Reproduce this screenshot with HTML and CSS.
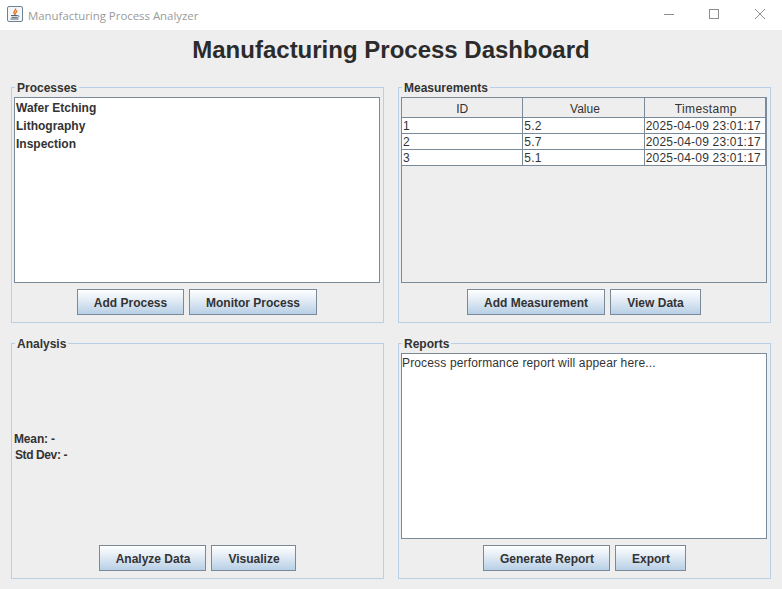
FILE: index.html
```html
<!DOCTYPE html>
<html>

<head>
    <meta charset="utf-8" />
    <title>Manufacturing Process Analyzer</title>
    <link rel="stylesheet" href="styles.css">
</head>

<body>
    <div class="titlebar">
        <svg class="app_icon" width="16" height="16" viewBox="0 0 16 16">
            <rect x="0.5" y="0.5" width="15" height="15" rx="1.5" fill="#f4f6f8" stroke="#6f8294"></rect>
            <path d="M8.5 2.500c1 1.600-2.200 2.800-1.600 4.600.2.6.7 1 1.100 1.300-.2-1.600 2.600-2.400 1.600-4.200" fill="none" stroke="#e8701a" stroke-width="1.3"></path>
            <path d="M4 9.500h6.500M4.500 11.300h5.500M3.500 13h8" stroke="#4a6272" stroke-width="1"></path>
            <path d="M10.500 9.500c2 -.3 2 1.700 -.5 2" fill="none" stroke="#4a6272" stroke-width="0.8"></path>
        </svg>
        <span class="app_name">Manufacturing Process Analyzer</span>
        <div class="win_btns">
            <svg width="46" height="30" viewBox="0 0 46 30"><path d="M20 14.500h10" stroke="#8c8c8c"></path></svg>
            <svg width="46" height="30" viewBox="0 0 46 30"><rect x="19.500" y="9.500" width="9" height="9" fill="none" stroke="#8c8c8c"></rect></svg>
            <svg width="46" height="30" viewBox="0 0 46 30"><path d="M19 9l10 10M29 9l-10 10" stroke="#8c8c8c"></path></svg>
        </div>
    </div>

    <h1 class="main_title">Manufacturing Process Dashboard</h1>

    <div class="panels">
        <fieldset class="panel">
            <legend>Processes</legend>
            <ul class="process_list">
                <li>Wafer Etching</li>
                <li>Lithography</li>
                <li>Inspection</li>
            </ul>
            <div class="btn_row">
                <button class="btn btn_add_process">Add Process</button>
                <button class="btn btn_monitor">Monitor Process</button>
            </div>
        </fieldset>

        <fieldset class="panel">
            <legend>Measurements</legend>
            <div class="table_div">
                <table cellspacing="0">
                    <thead>
                        <tr><th>ID</th><th>Value</th><th>Timestamp</th></tr>
                    </thead>
                    <tbody>
                        <tr><td>1</td><td>5.2</td><td>2025-04-09 23:01:17</td></tr>
                        <tr><td>2</td><td>5.7</td><td>2025-04-09 23:01:17</td></tr>
                        <tr><td>3</td><td>5.1</td><td>2025-04-09 23:01:17</td></tr>
                    </tbody>
                </table>
            </div>
            <div class="btn_row">
                <button class="btn btn_add_measure">Add Measurement</button>
                <button class="btn btn_view">View Data</button>
            </div>
        </fieldset>

        <fieldset class="panel">
            <legend>Analysis</legend>
            <div class="stats">
                <div class="stat">Mean: -</div>
                <div class="stat stat_dev">Std Dev: -</div>
            </div>
            <div class="btn_row">
                <button class="btn btn_analyze">Analyze Data</button>
                <button class="btn btn_visualize">Visualize</button>
            </div>
        </fieldset>

        <fieldset class="panel">
            <legend>Reports</legend>
            <div class="report_box">Process performance report will appear here...</div>
            <div class="btn_row">
                <button class="btn btn_generate">Generate Report</button>
                <button class="btn btn_export">Export</button>
            </div>
        </fieldset>
    </div>
</body>

</html>
```

FILE: styles.css
```css
html,
body {
    margin: 0;
    height: 100%;
}

body {
    background: #eeeeee;
    color: #333333;
    font-family: "Liberation Sans", Arial, sans-serif;
    font-size: 12px;
    overflow: hidden;
}

.titlebar {
    height: 30px;
    background: #ffffff;
    display: flex;
    align-items: center;
    padding-left: 7px;
}

.app_icon {
    margin-right: 5px;
    margin-bottom: 2px;
}

.app_name {
    color: #9a9a9a;
    font-size: 11.4px;
    font-family: "Open Sans", sans-serif;
}

.win_btns {
    margin-left: auto;
    display: flex;
}

.win_btns svg {
    display: block;
}

.main_title {
    margin: 0;
    height: 50px;
    padding-top: 6px;
    box-sizing: border-box;
    text-align: center;
    font-size: 24px;
    line-height: 28px;
    font-weight: bold;
    color: #2b2b2b;
}

.panels {
    display: grid;
    grid-template-columns: 373px 373px;
    grid-template-rows: 243px 243px;
    column-gap: 14px;
    row-gap: 13px;
    padding-left: 11px;
}

.panel {
    margin: 0;
    padding: 3px 3px 7px 2px;
    min-width: 0;
    border: 1px solid #b8cfe5;
    display: flex;
    flex-direction: column;
}

.panel legend {
    margin-left: 1px;
    padding: 2px 2px 0 2px;
    font-weight: bold;
    font-size: 12px;
    line-height: 12px;
    color: #333333;
}

.process_list {
    flex: 1;
    margin: 0;
    padding: 1px 0 0 1px;
    list-style: none;
    background: #ffffff;
    border: 1px solid #7a8a99;
    font-weight: bold;
}

.process_list li {
    height: 18px;
    line-height: 18px;
}

.table_div {
    flex: 1;
    border: 1px solid #7a8a99;
    background: #eeeeee;
}

.table_div table {
    width: 100%;
    table-layout: fixed;
    border-collapse: separate;
}

.table_div th {
    height: 17px;
    padding: 2px 0 0 0;
    font-weight: normal;
    text-align: center;
    background: #eeeeee;
    border-right: 1px solid #7a8a99;
    border-bottom: 1px solid #7a8a99;
}

.table_div th:nth-child(2) {
    padding-left: 3px;
}

.table_div th:nth-child(3) {
    padding-left: 2px;
    letter-spacing: 0.35px;
}

.table_div td {
    height: 13px;
    padding: 2px 0 0 1px;
    line-height: 13px;
    letter-spacing: 0.2px;
    background: #ffffff;
    border-right: 1px solid #7a8a99;
    border-bottom: 1px solid #7a8a99;
    white-space: nowrap;
    overflow: hidden;
}

.stats {
    flex: 1;
    display: flex;
    flex-direction: column;
    justify-content: center;
    padding-top: 2px;
    font-weight: bold;
}

.stat {
    height: 16px;
    line-height: 16px;
    letter-spacing: -0.15px;
}

.stat_dev {
    padding-left: 1px;
    letter-spacing: -0.4px;
}

.report_box {
    flex: 1;
    padding: 2px 0 0 0;
    background: #ffffff;
    border: 1px solid #7a8a99;
    line-height: 15px;
    letter-spacing: 0.15px;
}

.btn_row {
    display: flex;
    justify-content: center;
    gap: 5px;
    margin-top: 6px;
}

.btn {
    height: 26px;
    padding: 2px 0 0 0;
    font-family: inherit;
    font-size: 12px;
    font-weight: bold;
    color: #333333;
    border: 1px solid #7a8a99;
    background: linear-gradient(180deg, #ffffff 0%, #dde8f3 50%, #b8cfe5 100%);
}

.btn_add_process { width: 107px; }
.btn_monitor { width: 128px; }
.btn_add_measure { width: 138px; }
.btn_view { width: 91px; }
.btn_analyze { width: 107px; padding-left: 2px; }
.btn_visualize { width: 85px; padding-left: 2px; }
.btn_generate { width: 127px; padding-left: 2px; }
.btn_export { width: 71px; padding-left: 2px; }
```
